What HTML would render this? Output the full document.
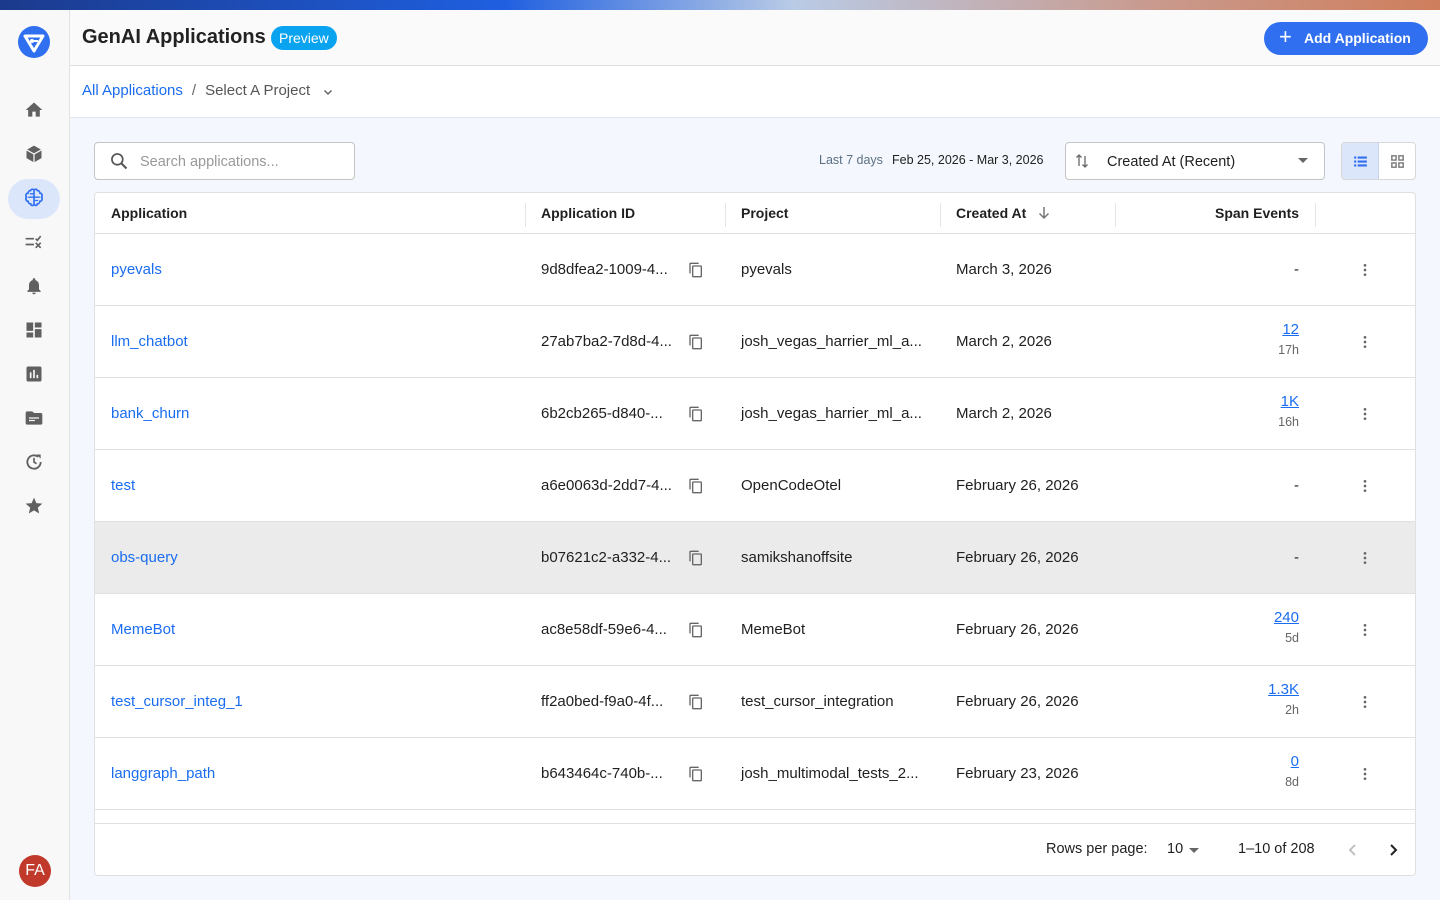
<!DOCTYPE html><html><head><meta charset="utf-8"><style>
*{box-sizing:border-box;margin:0;padding:0}
body{width:1440px;height:900px;overflow:hidden;font-family:"Liberation Sans",sans-serif;background:#f4f7fd;position:relative;color:#1f1f1f}
.top{position:absolute;left:0;top:0;width:1440px;height:10px;background:linear-gradient(90deg,#1b3a8c 0%,#1f5fe0 35%,#b9cbe6 55%,#c99a8e 80%,#cf7e5c 100%)}
.side{position:absolute;left:0;top:10px;width:70px;height:890px;background:#f8f8f8;border-right:1px solid #e2e2e2}
.ic{position:absolute;left:24px;width:20px;height:20px}
.hdr{position:absolute;left:70px;top:10px;width:1370px;height:56px;background:#fafafa;border-bottom:1px solid #e0e0e0}
.bc{position:absolute;left:70px;top:66px;width:1370px;height:52px;background:#fff;border-bottom:1px solid #e3e6ec}
.abs{position:absolute}
.card{position:absolute;left:94px;top:192px;width:1322px;height:684px;background:#fff;border:1px solid #e0e0e0;border-radius:4px;overflow:hidden}
.row{position:absolute;left:0;width:1320px;height:72px;border-bottom:1px solid #e0e0e0;font-size:15px}
.row>div{position:absolute;top:27px}
.lnk{color:#1a6df0}
.th{position:absolute;top:12px;font-size:14px;font-weight:bold}
.dv{position:absolute;top:10px;width:1px;height:24px;background:#e5e5e5}
</style></head><body>
<div class="top"></div>
<div class="side">
<svg class="abs" style="left:18px;top:16px" width="32" height="32" viewBox="0 0 32 32"><circle cx="16" cy="16" r="16" fill="#2f6ff0"/><path d="M7 10h18l-9 15z" fill="none" stroke="#fff" stroke-width="3" stroke-linejoin="round"/><circle cx="14" cy="15" r="2" fill="#fff"/><path d="M14 15h6" stroke="#fff" stroke-width="2"/></svg>
<svg class="ic" style="top:90px" viewBox="0 0 24 24"><path d="M10 20v-6h4v6h5v-8h3L12 3 2 12h3v8z" fill="#606060"/></svg>
<svg class="ic" style="top:134px" viewBox="0 0 24 24"><path d="M12 2l9 5v10l-9 5-9-5V7z" fill="#606060"/><path d="M3 7l9 5 9-5M12 12v10" stroke="#f8f8f8" stroke-width="1.5" fill="none"/></svg>
<div class="abs" style="left:8px;top:169px;width:52px;height:40px;border-radius:20px;background:#dce6fb"></div>
<svg class="ic" style="top:178px" viewBox="0 0 24 24"><path d="M8 3a3 3 0 00-3 3 3 3 0 00-2 5 3 3 0 002 5 3 3 0 003 3 2 2 0 004 0V4a2 2 0 00-4-1zM16 3a3 3 0 013 3 3 3 0 012 5 3 3 0 01-2 5 3 3 0 01-3 3 2 2 0 01-4 0V4a2 2 0 014-1z" fill="none" stroke="#2f6ff0" stroke-width="2"/><path d="M5 11h14M7 7h4M13 15h4" stroke="#2f6ff0" stroke-width="1.6"/></svg>
<svg class="ic" style="top:222px" viewBox="0 0 24 24"><path d="M2 8h10M2 15h10" stroke="#606060" stroke-width="2"/><path d="M14 8l2 2 4-5M14 13l6 6M20 13l-6 6" stroke="#606060" stroke-width="2" fill="none"/></svg>
<svg class="ic" style="top:266px" viewBox="0 0 24 24"><path d="M12 22a2 2 0 002-2h-4a2 2 0 002 2zm6-6V11c0-3-2-5.5-4.5-6V4a1.5 1.5 0 00-3 0v1C8 5.5 6 8 6 11v5l-2 2v1h16v-1z" fill="#606060"/></svg>
<svg class="ic" style="top:310px" viewBox="0 0 24 24"><path d="M3 13h8V3H3zm0 8h8v-6H3zm10 0h8V11h-8zm0-18v6h8V3z" fill="#606060"/></svg>
<svg class="ic" style="top:354px" viewBox="0 0 24 24"><path d="M19 3H5a2 2 0 00-2 2v14a2 2 0 002 2h14a2 2 0 002-2V5a2 2 0 00-2-2zM9 17H7v-7h2zm4 0h-2V7h2zm4 0h-2v-4h2z" fill="#606060"/></svg>
<svg class="ic" style="top:398px" viewBox="0 0 24 24"><path d="M20 6h-8l-2-2H4a2 2 0 00-2 2v12a2 2 0 002 2h16a2 2 0 002-2V8a2 2 0 00-2-2z" fill="#606060"/><path d="M6 12h12M6 15h7" stroke="#f8f8f8" stroke-width="1.6"/></svg>
<svg class="ic" style="top:442px" viewBox="0 0 24 24"><path d="M20 12a8 8 0 11-3-6.2" fill="none" stroke="#606060" stroke-width="2.2"/><path d="M12 7v5l3 2" stroke="#606060" stroke-width="2" fill="none"/><path d="M15 3h5v5z" fill="#606060"/></svg>
<svg class="ic" style="top:486px" viewBox="0 0 24 24"><path d="M12 17.3l6.2 3.7-1.6-7L22 9.2l-7.2-.6L12 2 9.2 8.6 2 9.2 7.4 14l-1.6 7z" fill="#606060"/></svg>
<div class="abs" style="left:19px;top:845px;width:32px;height:32px;border-radius:50%;background:#c0392b;color:#fff;font-size:16px;line-height:32px;text-align:center">FA</div>
</div>
<div class="hdr">
<div class="abs" style="left:12px;top:16px;font-size:20px;font-weight:bold;color:#222">GenAI Applications</div>
<div class="abs" style="left:201px;top:16px;height:24px;padding:0 8px;border-radius:12px;background:#0aa3ef;color:#fff;font-size:14px;line-height:24px">Preview</div>
<div class="abs" style="left:1194px;top:12px;width:164px;height:33px;border-radius:17px;background:#2f6ff0;color:#fff;font-size:14px;font-weight:bold;line-height:33px;padding-left:40px">Add Application</div>
<div class="abs" style="left:1209px;top:14px;color:#fff;font-size:22px">+</div>
</div>
<div class="bc">
<div class="abs" style="left:12px;top:16px;font-size:15px"><span class="lnk">All Applications</span><span style="color:#666;margin:0 9px">/</span><span style="color:#555">Select A Project</span></div>
<svg class="abs" style="left:252px;top:20px" width="12" height="12" viewBox="0 0 12 12"><path d="M2.5 4.5L6 8l3.5-3.5" fill="none" stroke="#666" stroke-width="1.5"/></svg>
</div>
<div class="abs" style="left:94px;top:142px;width:261px;height:38px;border:1px solid #c4c4c4;border-radius:4px;background:#fff">
<svg class="abs" style="left:14px;top:8px" width="20" height="20" viewBox="0 0 24 24"><circle cx="10" cy="10" r="6.5" fill="none" stroke="#555" stroke-width="2"/><path d="M15 15l6 6" stroke="#555" stroke-width="2.4"/></svg>
<div class="abs" style="left:45px;top:11px;font-size:14.5px;color:#999">Search applications...</div></div>
<div class="abs" style="left:819px;top:153px;font-size:12.5px;color:#5b7083">Last 7 days</div>
<div class="abs" style="left:892px;top:153px;font-size:12.5px;color:#222">Feb 25, 2026 - Mar 3, 2026</div>
<div class="abs" style="left:1065px;top:142px;width:260px;height:38px;border:1px solid #c4c4c4;border-radius:4px;background:#fff">
<svg class="abs" style="left:9px;top:10px" width="14" height="16" viewBox="0 0 14 16"><path d="M4 13V2M1.5 4.5L4 2l2.5 2.5M10 3v11M7.5 11.5L10 14l2.5-2.5" fill="none" stroke="#666" stroke-width="1.3"/></svg>
<div class="abs" style="left:41px;top:11px;font-size:14.5px">Created At (Recent)</div>
<div class="abs" style="left:232px;top:15px;border:5px solid transparent;border-top-color:#666"></div></div>
<div class="abs" style="left:1341px;top:142px;width:75px;height:38px;border:1px solid #d8d8d8;border-radius:4px;background:#fff;overflow:hidden">
<div class="abs" style="left:0;top:0;width:37px;height:38px;background:#dce6fb;border-right:1px solid #c9d4ea"></div>
<svg class="abs" style="left:10px;top:10px" width="17" height="17" viewBox="0 0 24 24"><path d="M3 5h3v3H3zm5 0h13v3H8zM3 10.5h3v3H3zm5 0h13v3H8zM3 16h3v3H3zm5 0h13v3H8z" fill="#2f6ff0"/></svg>
<svg class="abs" style="left:47px;top:10px" width="17" height="17" viewBox="0 0 24 24"><path d="M4 4h6v6H4zM14 4h6v6h-6zM4 14h6v6H4zM14 14h6v6h-6z" fill="none" stroke="#777" stroke-width="2"/></svg></div>
<div class="card">
<div class="th" style="left:16px">Application</div><div class="th" style="left:446px">Application ID</div><div class="th" style="left:646px">Project</div><div class="th" style="left:861px">Created At</div><div class="th" style="left:1120px">Span Events</div>
<svg class="abs" style="left:942px;top:13px" width="14" height="14" viewBox="0 0 14 14"><path d="M7 1v11M2.5 7.5L7 12l4.5-4.5" fill="none" stroke="#777" stroke-width="1.5"/></svg>
<div class="dv" style="left:430px"></div><div class="dv" style="left:630px"></div><div class="dv" style="left:845px"></div><div class="dv" style="left:1020px"></div><div class="dv" style="left:1220px"></div>
<div class="abs" style="left:0;top:40px;width:1320px;height:1px;background:#e0e0e0"></div>
<div id="rows"></div>
<div class="abs" style="left:0;top:630px;width:1320px;height:1px;background:#e0e0e0"></div>
<div class="abs" style="left:951px;top:648px;font-size:14.5px">Rows per page:</div>
<div class="abs" style="left:1072px;top:648px;font-size:14.5px">10</div>
<div class="abs" style="left:1094px;top:655px;border:5px solid transparent;border-top-color:#666"></div>
<div class="abs" style="left:1143px;top:648px;font-size:14.5px">1–10 of 208</div>
<svg class="abs" style="left:1252px;top:650px" width="12" height="14" viewBox="0 0 12 14"><path d="M8 2L3 7l5 5" fill="none" stroke="#bbb" stroke-width="1.8"/></svg>
<svg class="abs" style="left:1292px;top:650px" width="12" height="14" viewBox="0 0 12 14"><path d="M4 2l5 5-5 5" fill="none" stroke="#222" stroke-width="2"/></svg>
</div>
<script>
var d=[["pyevals","9d8dfea2-1009-4...","pyevals","March 3, 2026","-",""],["llm_chatbot","27ab7ba2-7d8d-4...","josh_vegas_harrier_ml_a...","March 2, 2026","12","17h"],["bank_churn","6b2cb265-d840-...","josh_vegas_harrier_ml_a...","March 2, 2026","1K","16h"],["test","a6e0063d-2dd7-4...","OpenCodeOtel","February 26, 2026","-",""],["obs-query","b07621c2-a332-4...","samikshanoffsite","February 26, 2026","-",""],["MemeBot","ac8e58df-59e6-4...","MemeBot","February 26, 2026","240","5d"],["test_cursor_integ_1","ff2a0bed-f9a0-4f...","test_cursor_integration","February 26, 2026","1.3K","2h"],["langgraph_path","b643464c-740b-...","josh_multimodal_tests_2...","February 23, 2026","0","8d"]];
var h="";d.forEach(function(r,i){var t=41+i*72;
var se=r[5]?'<div style="right:116px;top:15px;text-align:right;position:absolute"><div class="lnk" style="text-decoration:underline">'+r[4]+'</div><div style="font-size:12.5px;color:#666;margin-top:5px">'+r[5]+'</div></div>':'<div style="right:116px">'+r[4]+'</div>';
h+='<div class="row" style="top:'+t+'px;'+(i==4?'background:#ebebeb':'')+'"><div class="lnk" style="left:16px">'+r[0]+'</div><div style="left:446px">'+r[1]+'</div><svg style="position:absolute;left:593px;top:28px" width="16" height="16" viewBox="0 0 24 24"><path d="M16 1H4a2 2 0 00-2 2v14h2V3h12zm3 4H8a2 2 0 00-2 2v14a2 2 0 002 2h11a2 2 0 002-2V7a2 2 0 00-2-2zm0 16H8V7h11z" fill="#666"/></svg><div style="left:646px">'+r[2]+'</div><div style="left:861px">'+r[3]+'</div>'+se+'<svg style="position:absolute;left:1262px;top:28px" width="16" height="16" viewBox="0 0 24 24"><circle cx="12" cy="5" r="2" fill="#666"/><circle cx="12" cy="12" r="2" fill="#666"/><circle cx="12" cy="19" r="2" fill="#666"/></svg></div>';});
document.getElementById("rows").innerHTML=h;
</script>
</body></html>
